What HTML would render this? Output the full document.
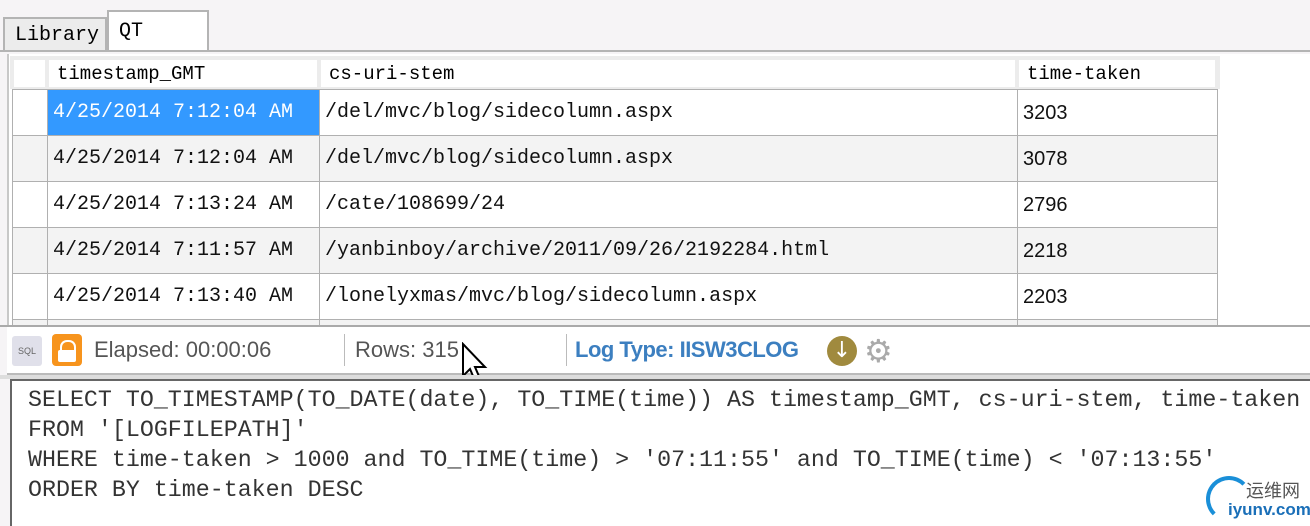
<html><head><style>
body{margin:0;width:1310px;height:524px;background:#f6f4f6;position:relative;overflow:hidden;font-family:"Liberation Mono",monospace}
.a{position:absolute}
.tab{position:absolute;border:2px solid #b4b4b4;border-bottom:none;font-size:20px;padding-left:10px;box-sizing:border-box}
.c{position:absolute;border:1.5px solid #b0b0b0;box-sizing:border-box;font-size:20px;line-height:46px;padding-left:5px;white-space:nowrap;color:#111}
.h{position:absolute;background:#fff;font-size:19px;line-height:28px;padding-left:8px;box-sizing:border-box;height:27px}
.st{font-family:"Liberation Sans",sans-serif;font-size:22px;color:#555;position:absolute;top:337px}
</style></head><body>
<div class="tab" style="left:3px;top:17px;width:104px;height:34px;background:#ececec;line-height:34px">Library</div>
<div class="tab" style="left:107px;top:10px;width:102px;height:42px;background:#fff;line-height:40px">QT</div>
<div class="a" style="left:0;top:50px;width:1310px;height:2px;background:#b4b4b4"></div>
<div class="a" style="left:7px;top:54px;width:1303px;height:272px;background:#fff;border-left:2px solid #c8c8c8"></div>
<div class="a" style="left:10px;top:56px;width:1210px;height:33px;background:#ececec"></div>
<div class="h" style="left:14px;top:60px;width:31px"></div>
<div class="h" style="left:49px;top:60px;width:268px">timestamp_GMT</div>
<div class="h" style="left:321px;top:60px;width:694px">cs-uri-stem</div>
<div class="h" style="left:1019px;top:60px;width:196px">time-taken</div>
<div id="g"></div>
<script>
var d=[["4/25/2014 7:12:04 AM","/del/mvc/blog/sidecolumn.aspx","3203"],["4/25/2014 7:12:04 AM","/del/mvc/blog/sidecolumn.aspx","3078"],["4/25/2014 7:13:24 AM","/cate/108699/24","2796"],["4/25/2014 7:11:57 AM","/yanbinboy/archive/2011/09/26/2192284.html","2218"],["4/25/2014 7:13:40 AM","/lonelyxmas/mvc/blog/sidecolumn.aspx","2203"],["","",""]];
var h="";
for(var i=0;i<6;i++){var y=89+i*46;var bg=i%2?"#f3f3f3":"#fff";var hh=i==5?(326-y):47;
h+='<div class="c" style="left:12px;top:'+y+'px;width:36px;height:'+hh+'px;background:'+bg+'"></div>';
h+='<div class="c" style="left:47px;top:'+y+'px;width:273px;height:'+hh+'px;background:'+(i==0?"#3399ff;color:#fff":bg)+'">'+d[i][0]+'</div>';
h+='<div class="c" style="left:319px;top:'+y+'px;width:699px;height:'+hh+'px;background:'+bg+'">'+d[i][1]+'</div>';
h+='<div class="c" style="left:1017px;top:'+y+'px;width:201px;height:'+hh+'px;background:'+bg+';font-family:Liberation Sans,sans-serif">'+d[i][2]+'</div>';}
document.getElementById("g").innerHTML=h;
</script>
<div class="a" style="left:0;top:325px;width:1310px;height:2px;background:#aaa"></div>
<div class="a" style="left:7px;top:327px;width:1303px;height:46px;background:#fff;border-bottom:2px solid #bbb"></div>
<div class="a" style="left:12px;top:336px;width:30px;height:30px;background:#e0e0ea;border-radius:3px;font-size:9px;color:#666;line-height:30px;text-align:center;font-family:Liberation Sans">SQL</div>
<div class="a" style="left:52px;top:334px;width:30px;height:32px;background:#f7941d;border-radius:4px"></div>
<div class="a" style="left:60px;top:340px;width:12px;height:10px;border:2.5px solid #fff;border-bottom:none;border-radius:7px 7px 0 0"></div>
<div class="a" style="left:58px;top:350px;width:18px;height:12px;background:#fff;border-radius:2px"></div>
<div class="st" style="left:94px">Elapsed: 00:00:06</div>
<div class="a" style="left:344px;top:334px;width:1px;height:32px;background:#bbb"></div>
<div class="st" style="left:355px">Rows: 315</div>
<div class="a" style="left:566px;top:334px;width:1px;height:32px;background:#bbb"></div>
<div class="st" style="left:575px;color:#3c7fc0;font-weight:bold;letter-spacing:-0.5px">Log Type: IISW3CLOG</div>
<div class="a" style="left:827px;top:336px;width:30px;height:30px;border-radius:50%;background:#a08a3e;color:#fff;font-size:22px;line-height:30px;text-align:center;font-family:DejaVu Sans">↓</div>
<div class="a" style="left:864px;top:332px;font-size:32px;color:#aaa;font-family:DejaVu Sans">⚙</div>
<svg class="a" style="left:460px;top:342px" width="30" height="46"><path d="M3 2 L3 34 L10 27 L16 41 L21 39 L15 25 L25 25 Z" fill="#fff" stroke="#000" stroke-width="2"/></svg>
<div class="a" style="left:0;top:375px;width:1310px;height:4px;background:#ddd"></div>
<div class="a" style="left:10px;top:379px;width:1300px;height:145px;background:#fff;border-left:2px solid #666;border-top:2px solid #666"></div>
<pre class="a" style="left:28px;top:385px;margin:0;font-size:23.3px;line-height:30px;color:#333;font-family:'Liberation Mono',monospace">SELECT TO_TIMESTAMP(TO_DATE(date), TO_TIME(time)) AS timestamp_GMT, cs-uri-stem, time-taken
FROM '[LOGFILEPATH]'
WHERE time-taken &gt; 1000 and TO_TIME(time) &gt; '07:11:55' and TO_TIME(time) &lt; '07:13:55'
ORDER BY time-taken DESC</pre>
<div class="a" style="left:1206px;top:476px;width:38px;height:38px;border-radius:50%;border:4px solid #1a8fd8;border-right-color:transparent;border-bottom-color:transparent"></div>
<div class="a" style="left:1246px;top:480px;font-size:18px;line-height:20px;color:#555;font-family:'Noto Sans CJK SC',sans-serif">运维网</div>
<div class="a" style="left:1228px;top:500px;font-size:17px;color:#1a6fb8;font-family:'Liberation Sans',sans-serif;font-weight:bold">iyunv.com</div>
</body></html>
